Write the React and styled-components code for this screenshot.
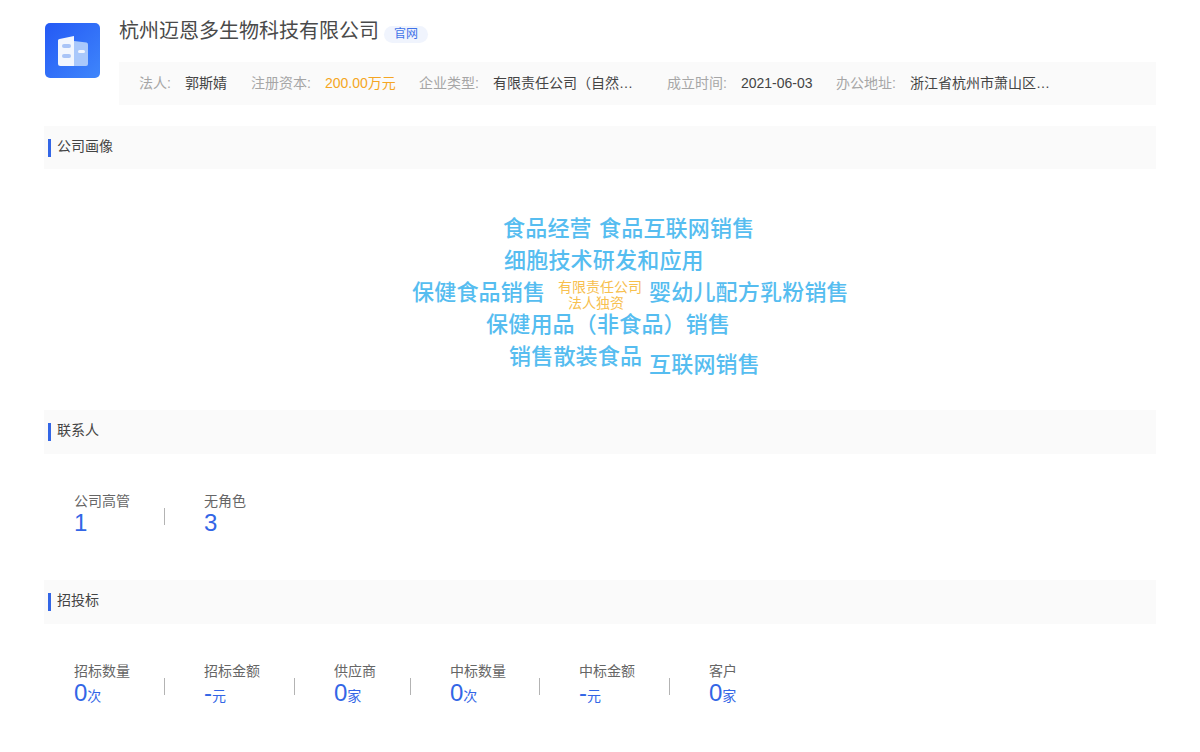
import React from 'react'
import styled, { createGlobalStyle } from 'styled-components'

const GlobalStyle = createGlobalStyle`
  html, body {
    margin: 0;
    padding: 0;
    background: #fff;
    font-family: "Liberation Sans", "Noto Sans CJK SC", sans-serif;
  }
`

const UI = {
  Page: styled.div`
    width: 1200px;
    height: 752px;
    overflow: hidden;
    box-sizing: border-box;
    padding: 18px 44px 0;
  `,
  Head: styled.header`
    display: flex;
    align-items: flex-start;
    height: 87px;
    margin-bottom: 21px;
  `,
  Logo: styled.div`
    flex: none;
    width: 55px;
    height: 55px;
    margin: 5px 19px 0 1px;
    border-radius: 5px;
    background: linear-gradient(135deg, #2459f5, #3f86fb);
    display: flex;
    align-items: center;
    justify-content: center;
  `,
  HeadMain: styled.div`
    flex: 1;
    min-width: 0;
  `,
  TitleRow: styled.div`
    display: flex;
    align-items: center;
    height: 26px;
    margin-bottom: 18px;
  `,
  Title: styled.h1`
    margin: 0;
    font-size: 20px;
    font-weight: 400;
    line-height: 26px;
    color: #4a4a4a;
  `,
  Tag: styled.span`
    margin: 6px 0 0 5px;
    width: 44px;
    height: 17px;
    border-radius: 9px;
    background: #f0f4fd;
    color: #3f72e8;
    font-size: 12px;
    line-height: 17px;
    text-align: center;
  `,
  InfoBar: styled.div`
    display: flex;
    align-items: center;
    height: 43px;
    box-sizing: border-box;
    padding: 0 0 4px 20px;
    background: #fafafa;
    font-size: 14px;
    white-space: nowrap;
  `,
  InfoItem: styled.div`
    display: flex;
    align-items: baseline;
    width: ${p => p.$width}px;
  `,
  InfoLabel: styled.span`
    color: #a6a6a6;
    margin-right: 14px;
  `,
  InfoValue: styled.span`
    color: ${p => (p.$accent ? '#f5a623' : '#444')};
  `,
  SectionHead: styled.div`
    display: flex;
    align-items: flex-start;
    height: ${p => p.$height}px;
    box-sizing: border-box;
    padding: ${p => p.$top}px 0 0 4px;
    background: #fafafa;
    font-size: 14px;
    line-height: 20px;
    color: #444;
  `,
  Mark: styled.i`
    width: 3px;
    height: 18px;
    margin: 3px 6px 0 0;
    background: #3366e6;
  `,
  Cloud: styled.div`
    position: relative;
    height: 241px;
  `,
  Word: styled.span`
    position: absolute;
    left: ${p => p.$x}px;
    top: ${p => p.$y}px;
    font-size: 22px;
    line-height: 30px;
    font-weight: 500;
    letter-spacing: 0.2px;
    color: #56bdf0;
    white-space: nowrap;
  `,
  SmallWord: styled.span`
    position: absolute;
    left: ${p => p.$x}px;
    top: ${p => p.$y}px;
    font-size: 14px;
    line-height: 16px;
    color: #f7c04f;
    white-space: nowrap;
  `,
  Stats: styled.div`
    display: flex;
    height: ${p => p.$height}px;
    box-sizing: border-box;
    padding: 38px 0 0 30px;
  `,
  Stat: styled.div`
    position: relative;
    width: ${p => p.$width}px;
    &:not(:last-child)::after {
      content: '';
      position: absolute;
      right: ${p => p.$gap}px;
      top: 16px;
      width: 1px;
      height: 17px;
      background: #b3b3b3;
    }
  `,
  StatLabel: styled.div`
    font-size: 14px;
    line-height: 18px;
    color: #666;
  `,
  StatValue: styled.div`
    font-size: 24px;
    line-height: 26px;
    color: #3366e6;
  `,
  Unit: styled.span`
    font-size: 14px;
  `,
}

const LogoIcon = () => (
  <svg width="30" height="30" viewBox="0 0 30 30">
    <path d="M16 5 L28.500 6.500 Q30 6.800 30 8.500 L30 28 Q30 30 28 30 L16 30 Z" fill="#a9c8fb" />
    <path d="M1.500 3 L16 0 L16 30 L2.500 30 Q0 30 0 27.500 L0 4.500 Q0 3.300 1.500 3 Z" fill="#f2f6fe" />
    <rect x="4" y="8" width="9" height="4" rx="2" fill="#a9c4f7" />
    <rect x="4" y="18" width="9" height="4" rx="2" fill="#a9c4f7" />
    <rect x="20" y="14" width="7" height="3" rx="1.500" fill="#f2f6fe" />
  </svg>
)

const info = [
  { label: '法人:', value: '郭斯婧', width: 112 },
  { label: '注册资本:', value: '200.00万元', width: 168, accent: true },
  { label: '企业类型:', value: '有限责任公司（自然…', width: 248 },
  { label: '成立时间:', value: '2021-06-03', width: 169 },
  { label: '办公地址:', value: '浙江省杭州市萧山区…', width: 240 },
]

const words = [
  { text: '食品经营', x: 459, y: 45 },
  { text: '食品互联网销售', x: 555, y: 45 },
  { text: '细胞技术研发和应用', x: 460, y: 77 },
  { text: '保健食品销售', x: 368, y: 109 },
  { text: '婴幼儿配方乳粉销售', x: 605, y: 109 },
  { text: '保健用品（非食品）销售', x: 442, y: 141 },
  { text: '销售散装食品', x: 465, y: 173 },
  { text: '互联网销售', x: 605, y: 181 },
]

const tenders = [
  { label: '招标数量', value: '0', unit: '次', width: 130, gap: 39 },
  { label: '招标金额', value: '-', unit: '元', width: 130, gap: 39 },
  { label: '供应商', value: '0', unit: '家', width: 116, gap: 39 },
  { label: '中标数量', value: '0', unit: '次', width: 129, gap: 39 },
  { label: '中标金额', value: '-', unit: '元', width: 130, gap: 39 },
  { label: '客户', value: '0', unit: '家', width: 80, gap: 0 },
]

const contacts = [
  { label: '公司高管', value: '1', width: 130, gap: 39 },
  { label: '无角色', value: '3', width: 80, gap: 0 },
]

function StatList ({ items, height }) {
  return (
    <UI.Stats $height={height}>
      {items.map(item => (
        <UI.Stat key={item.label} $width={item.width} $gap={item.gap}>
          <UI.StatLabel>{item.label}</UI.StatLabel>
          <UI.StatValue>
            {item.value}
            {item.unit && <UI.Unit>{item.unit}</UI.Unit>}
          </UI.StatValue>
        </UI.Stat>
      ))}
    </UI.Stats>
  )
}

export default function App () {
  return (
    <UI.Page>
      <GlobalStyle />
      <UI.Head>
        <UI.Logo><LogoIcon /></UI.Logo>
        <UI.HeadMain>
          <UI.TitleRow>
            <UI.Title>杭州迈恩多生物科技有限公司</UI.Title>
            <UI.Tag>官网</UI.Tag>
          </UI.TitleRow>
          <UI.InfoBar>
            {info.map(item => (
              <UI.InfoItem key={item.label} $width={item.width}>
                <UI.InfoLabel>{item.label}</UI.InfoLabel>
                <UI.InfoValue $accent={item.accent}>{item.value}</UI.InfoValue>
              </UI.InfoItem>
            ))}
          </UI.InfoBar>
        </UI.HeadMain>
      </UI.Head>

      <UI.SectionHead $height={43} $top={10}>
        <UI.Mark />公司画像
      </UI.SectionHead>
      <UI.Cloud>
        {words.map(word => (
          <UI.Word key={word.text} $x={word.x} $y={word.y}>{word.text}</UI.Word>
        ))}
        <UI.SmallWord $x={514} $y={110}>有限责任公司</UI.SmallWord>
        <UI.SmallWord $x={524} $y={126}>法人独资</UI.SmallWord>
      </UI.Cloud>

      <UI.SectionHead $height={44} $top={10}>
        <UI.Mark />联系人
      </UI.SectionHead>
      <StatList items={contacts} height={126} />

      <UI.SectionHead $height={44} $top={10}>
        <UI.Mark />招投标
      </UI.SectionHead>
      <StatList items={tenders} height={126} />
    </UI.Page>
  )
}
